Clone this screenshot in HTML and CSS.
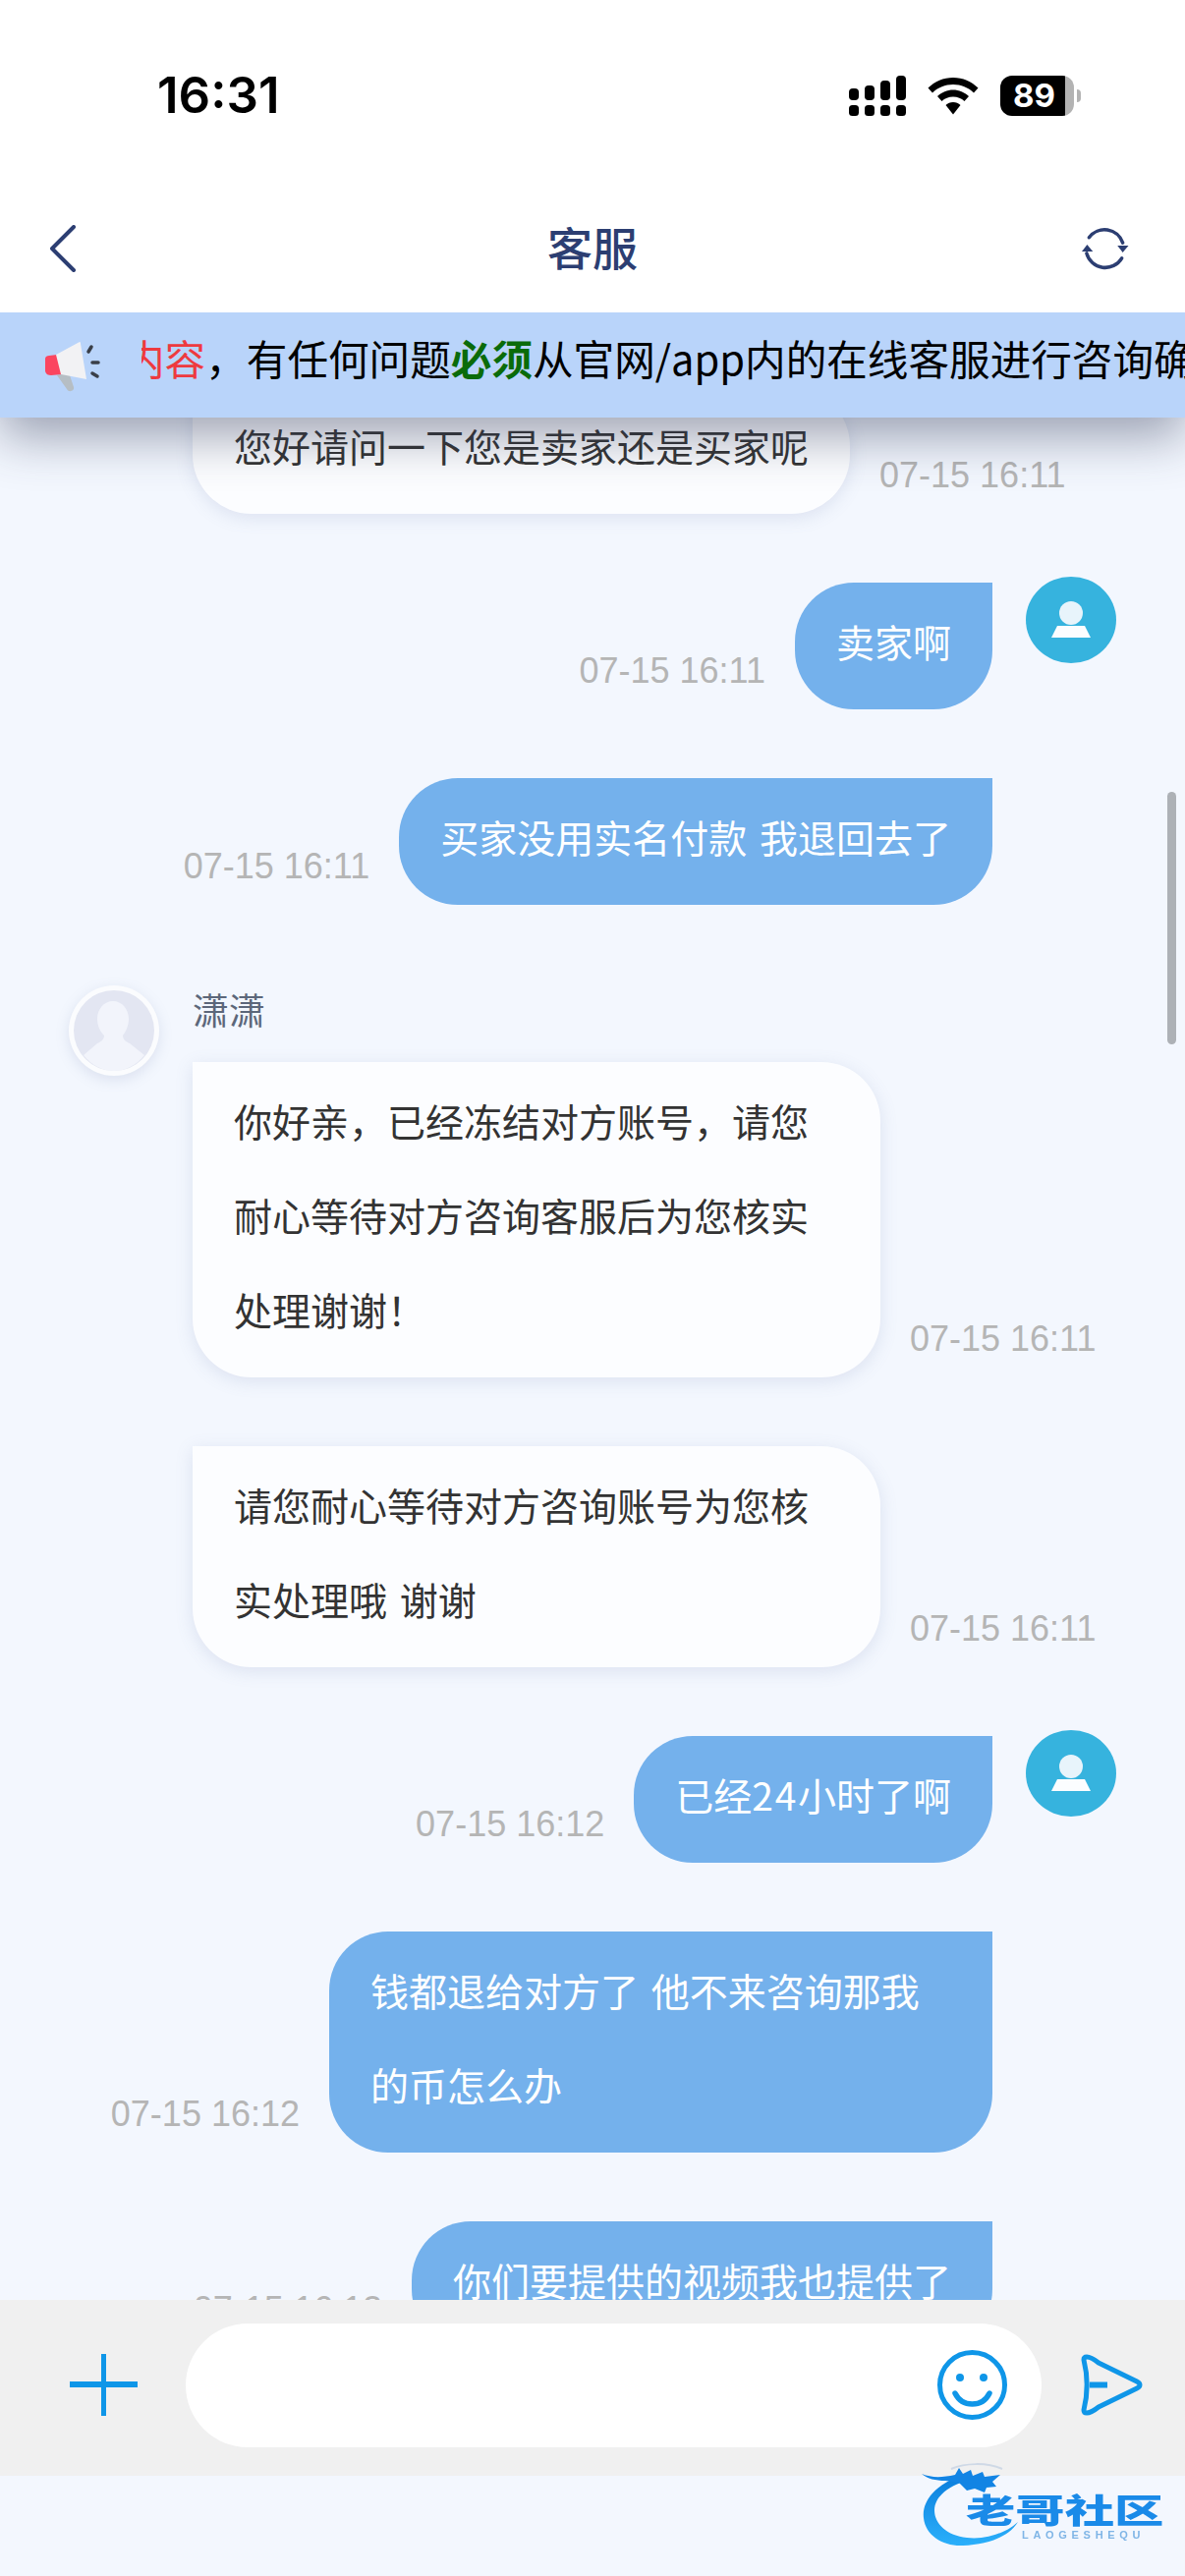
FILE: index.html
```html
<!DOCTYPE html>
<html lang="zh">
<head>
  <meta charset="UTF-8" />
  <meta name="viewport" content="width=device-width, initial-scale=1.0" />
  <title>客服</title>
  <link rel="stylesheet" href="styles.css">
</head>
<body>
  <div class="phone">
    <div class="status">
      <span class="clock">16:31</span>
      <div class="status-icons">
        <svg class="signal" width="58" height="41" viewBox="0 0 58 41">
          <rect x="0" y="13" width="10" height="12" rx="4"/><rect x="16" y="10" width="10" height="15" rx="4"/><rect x="32" y="5" width="10" height="20" rx="4"/><rect x="48" y="0" width="10" height="25" rx="4"/>
          <rect x="0" y="30" width="10" height="11" rx="3.5"/><rect x="16" y="30" width="10" height="11" rx="3.5"/><rect x="32" y="30" width="10" height="11" rx="3.5"/><rect x="48" y="30" width="10" height="11" rx="3.5"/>
        </svg>
        <svg class="wifi" width="52" height="38" viewBox="0 0 52 38">
          <path d="M26 0C16 0 7.500 4 0.500 10.500L5 15.500C10.500 10 18 7 26 7S41.500 10 47 15.500L51.500 10.500C44.500 4 36 0 26 0Z"/>
          <path d="M26 12.500C20 12.500 14.500 15 10 19L14.500 24C17.500 21 21.500 19.500 26 19.500S34.500 21 37.500 24L42 19C37.500 15 32 12.500 26 12.500Z"/>
          <path d="M26 25C23 25 20.500 26 18.500 28L26 37.500L33.500 28C31.500 26 29 25 26 25Z"/>
        </svg>
        <div class="battery">
          <span class="battery-fill">89</span>
          <span class="battery-tip"></span>
        </div>
      </div>
    </div>

    <div class="topbar">
      <div class="bar-side">
        <svg width="26" height="48" viewBox="0 0 26 48" fill="none" stroke="#2c3e72" stroke-width="4" stroke-linecap="round" stroke-linejoin="round">
          <path d="M24 2L2 24L24 46"/>
        </svg>
      </div>
      <h1>客服</h1>
      <div class="bar-side bar-side-right">
        <svg width="49" height="44" viewBox="0 0 49 44" fill="none" stroke="#2c3e72" stroke-width="3.600" stroke-linecap="round">
          <path d="M7.500 10.500A20 20 0 0 1 42.500 16"/>
          <path d="M41.500 32A20 20 0 0 1 5 27"/>
          <path d="M37 19H48.500L42.500 26Z" fill="#2c3e72" stroke="none"/>
          <path d="M0 25H11.500L5.500 18Z" fill="#2c3e72" stroke="none"/>
        </svg>
      </div>
    </div>

    <div class="notice">
      <svg class="horn" width="58" height="52" viewBox="0 0 58 52">
        <path d="M14 34L26 31L31 46C32 50 26 52 24 48Z" fill="#b6bec4"/>
        <path d="M2 17C2 15 4 14 6 14L14 13L19 33L8 34C5 34 3 33 2 30Z" fill="#fb4560"/>
        <path d="M13 13L37 0C38 0 38 1 38 2L44 38L18 33Z" fill="#f2f2f4"/>
        <path d="M49 5L46 10M50 21H56M50 32L55 35" stroke="#3a3f48" stroke-width="3.500" stroke-linecap="round" fill="none"/>
      </svg>
      <div class="notice-track">
        <p class="notice-text"><span class="red">内容</span>，有任何问题<b class="green">必须</b>从官网/app内的在线客服进行咨询确认</p>
      </div>
    </div>

    <div class="chat">
      <div class="row row-in row-first">
        <div class="avatar-slot"></div>
        <div class="bubble">您好请问一下您是卖家还是买家呢</div>
        <span class="time">07-15 16:11</span>
      </div>

      <div class="row row-me">
        <span class="time">07-15 16:11</span>
        <div class="bubble">卖家啊</div>
        <div class="avatar-slot">
          <svg class="avatar-me" width="92" height="88" viewBox="0 0 92 88">
            <ellipse cx="46" cy="44" rx="46" ry="44" fill="#36b3de"/>
            <circle cx="46" cy="37" r="12" fill="#e8f4fb"/>
            <path d="M32 50H60L66 62H26Z" fill="#fbfdff"/>
          </svg>
        </div>
      </div>

      <div class="row row-me">
        <span class="time">07-15 16:11</span>
        <div class="bubble">买家没用实名付款 我退回去了</div>
        <div class="avatar-slot"></div>
      </div>

      <div class="row row-in row-named">
        <div class="avatar-slot">
          <div class="avatar-agent">
            <svg width="82" height="82" viewBox="0 0 82 82">
              <circle cx="41" cy="41" r="41" fill="#e3e6f2"/>
              <path d="M40 11C49 11 56 19 56 29C56 36 53 42 50 46C50 49 52 52 57 54L72 66C64 76 53 82 41 82S18 76 10 66L24 54C29 52 31 49 31 46C27 42 24 36 24 29C24 19 31 11 40 11Z" fill="#f2f4fb"/>
            </svg>
          </div>
        </div>
        <div class="named">
          <div class="name">潇潇</div>
          <div class="bubble-line">
            <div class="bubble">你好亲，已经冻结对方账号，请您耐心等待对方咨询客服后为您核实处理谢谢！</div>
            <span class="time">07-15 16:11</span>
          </div>
        </div>
      </div>

      <div class="row row-in">
        <div class="avatar-slot"></div>
        <div class="bubble">请您耐心等待对方咨询账号为您核实处理哦 谢谢</div>
        <span class="time">07-15 16:11</span>
      </div>

      <div class="row row-me">
        <span class="time">07-15 16:12</span>
        <div class="bubble">已经<span class="num">24</span>小时了啊</div>
        <div class="avatar-slot">
          <svg class="avatar-me" width="92" height="88" viewBox="0 0 92 88">
            <ellipse cx="46" cy="44" rx="46" ry="44" fill="#36b3de"/>
            <circle cx="46" cy="37" r="12" fill="#e8f4fb"/>
            <path d="M32 50H60L66 62H26Z" fill="#fbfdff"/>
          </svg>
        </div>
      </div>

      <div class="row row-me">
        <span class="time">07-15 16:12</span>
        <div class="bubble">钱都退给对方了 他不来咨询那我的币怎么办</div>
        <div class="avatar-slot"></div>
      </div>

      <div class="row row-me">
        <span class="time">07-15 16:12</span>
        <div class="bubble">你们要提供的视频我也提供了</div>
        <div class="avatar-slot"></div>
      </div>

      <div class="scrollbar"></div>
    </div>

    <div class="inputbar">
      <svg width="69" height="63" viewBox="0 0 69 63" fill="#0f96e8">
        <rect x="0" y="28" width="69" height="6"/><rect x="32" y="0" width="5" height="63"/>
      </svg>
      <div class="field">
        <svg width="71" height="71" viewBox="0 0 71 71" fill="none" stroke="#0f96e8" stroke-width="5">
          <circle cx="35.500" cy="35.500" r="33"/>
          <circle cx="23" cy="28" r="4" fill="#0f96e8" stroke="none"/>
          <circle cx="47" cy="28" r="4" fill="#0f96e8" stroke="none"/>
          <path d="M18 44C22 52 28 55 35.500 55S49 52 53 44" stroke-width="5.500" stroke-linecap="round"/>
        </svg>
      </div>
      <svg width="63" height="63" viewBox="0 0 63 63" fill="none" stroke="#0f96e8" stroke-width="5" stroke-linejoin="round" stroke-linecap="round">
        <path d="M6 3C4 3 3 4 3 6C7 22 7 41 3 57C3 59 4 60 6 60C9 60 13 58 18 54L57 35C61 33 61 30 57 28L18 9C13 5 9 3 6 3Z"/>
        <path d="M9 31.500H27" stroke-width="6" stroke-linecap="butt"/>
      </svg>
    </div>

    <div class="footer">
      <div class="logo">
        <svg width="130" height="85" viewBox="0 0 130 85">
          <defs>
            <linearGradient id="swoosh" x1="0" y1="0" x2="0" y2="1">
              <stop offset="0" stop-color="#0c7fdd"/>
              <stop offset="1" stop-color="#2bb0fb"/>
            </linearGradient>
          </defs>
          <path d="M34 15C12 25 0 40 2 56C4 74 22 85 42 84C66 83 88 76 98 60C85 72 65 78 46 76C26 74 13 62 13 48C13 36 24 26 40 20Z" fill="url(#swoosh)"/>
          <path d="M0 11C10 15 20 15 34 12L38 5L42 11L50 7L52 13L62 9L64 14L80 12L72 19L76 24L66 25L64 30L54 26L46 28L38 20L24 18C14 18 6 16 0 11Z" fill="#1284e4"/>
          <path d="M30 6C44 0 66 -1 82 6" stroke="#cfd9e6" stroke-width="2" fill="none"/>
        </svg>
        <span class="logo-name">老哥社区</span>
        <span class="logo-sub">LAOGESHEQU</span>
      </div>
    </div>
  </div>
</body>
</html>
```

FILE: styles.css
```css
* {
  box-sizing: border-box;
}
html, body {
  margin: 0;
  padding: 0;
}
body {
  font-family: "Noto Sans CJK SC", "Liberation Sans", sans-serif;
  background-color: #f3f7fe;
}
.phone {
  width: 1206px;
  height: 2622px;
  display: flex;
  flex-direction: column;
  overflow: hidden;
  background-color: #f3f7fe;
}

/* status bar */
.status {
  height: 200px;
  flex: none;
  position: relative;
  z-index: 3;
  background-color: #fff;
  display: flex;
  justify-content: space-between;
  align-items: flex-start;
  padding: 66px 106px 0 160px;
}
.clock {
  font-family: Inter, "Liberation Sans", sans-serif;
  font-size: 51px;
  font-weight: 600;
  line-height: 62px;
  color: #000;
}
.status-icons {
  display: flex;
  align-items: center;
  gap: 22px;
  margin-top: 11px;
}
.battery {
  display: flex;
  align-items: center;
  gap: 3px;
}
.battery-fill {
  width: 75px;
  height: 41px;
  border-radius: 12px;
  background: linear-gradient(90deg, #000 88%, #b3b3b3 88%);
  color: #fff;
  font-family: Inter, "Liberation Sans", sans-serif;
  font-size: 33px;
  font-weight: 700;
  line-height: 41px;
  padding-left: 13px;
}
.battery-tip {
  width: 4px;
  height: 13px;
  background-color: #b3b3b3;
  border-radius: 0 4px 4px 0;
}

/* title bar */
.topbar {
  height: 118px;
  flex: none;
  position: relative;
  z-index: 3;
  background-color: #fff;
  display: flex;
  justify-content: space-between;
  align-items: center;
  padding: 0 57px 12px 51px;
}
.bar-side {
  width: 54px;
  display: flex;
}
.bar-side-right {
  justify-content: flex-end;
  width: 48px;
}
.topbar h1 {
  margin: 0 0 6px;
  font-size: 46px;
  font-weight: 500;
  line-height: 60px;
  color: #2c3e72;
}

/* scrolling notice */
.notice {
  height: 107px;
  flex: none;
  position: relative;
  z-index: 2;
  background-color: #b9d4fa;
  display: flex;
  align-items: center;
  padding-left: 44px;
  box-shadow: 0 20px 50px rgba(50, 60, 90, 0.45);
}
.horn {
  flex: none;
  margin-top: 4px;
}
.notice-track {
  flex: 1;
  min-width: 0;
  margin-left: 42px;
  padding-bottom: 16px;
  overflow: hidden;
}
.notice-text {
  margin: 0 0 0 -18px;
  font-size: 41.600px;
  line-height: 60px;
  white-space: nowrap;
  color: #000;
}
.red {
  color: #ee3a3f;
}
.green {
  color: #0a6b0a;
}

/* messages */
.chat {
  flex: 1;
  min-height: 0;
  position: relative;
  overflow: hidden;
  padding: 0 70px;
}
.row {
  display: flex;
  align-items: flex-end;
  margin-top: 70px;
}
.row-first {
  margin-top: -31px;
}
.row-me {
  justify-content: flex-end;
}
.row-named {
  margin-top: 82px;
}
.avatar-slot {
  width: 92px;
  flex: none;
  align-self: flex-start;
}
.row-in .avatar-slot {
  margin-right: 34px;
}
.row-me .avatar-slot {
  margin-left: 34px;
}
.avatar-me {
  display: block;
  margin-top: -6px;
}
.avatar-agent {
  width: 92px;
  height: 92px;
  border-radius: 50%;
  background-color: #fbfcfe;
  padding: 5px;
  box-shadow: 0 4px 14px rgba(110, 130, 170, 0.18);
}
.avatar-agent svg {
  display: block;
}
.named {
  display: flex;
  flex-direction: column;
}
.name {
  height: 78px;
  padding-top: 2px;
  font-size: 37px;
  line-height: 44px;
  color: #5c677a;
}
.bubble-line {
  display: flex;
  align-items: flex-end;
}
.bubble {
  padding: 10.500px 42px 22.500px;
  font-size: 39px;
  line-height: 96px;
  word-spacing: 4px;
}
.num {
  letter-spacing: 1.700px;
}
.row-in .bubble {
  max-width: 700px;
  background-color: #fcfdff;
  color: #333;
  border-radius: 0 60px 60px 60px;
  box-shadow: 0 4px 18px rgba(100, 120, 170, 0.16);
}
.row-me .bubble {
  max-width: 675px;
  background-color: #74b1ec;
  color: #fff;
  border-radius: 60px 0 60px 60px;
}
.time {
  flex: none;
  margin-bottom: 19px;
  font-family: "Liberation Sans", Arial, sans-serif;
  font-size: 36px;
  line-height: 40px;
  color: #b5b5b5;
}
.row-in .time {
  margin-left: 30px;
}
.row-me .time {
  margin-right: 30px;
}
.scrollbar {
  position: absolute;
  top: 381px;
  right: 9px;
  width: 9px;
  height: 257px;
  border-radius: 5px;
  background-color: #adb1b6;
}

/* input */
.inputbar {
  height: 179px;
  flex: none;
  background-color: #f0f0f0;
  display: flex;
  align-items: center;
  padding: 0 43px 6px 71px;
}
.field {
  flex: 1;
  height: 126px;
  margin: 0 40px 0 49px;
  border-radius: 63px;
  background-color: #fff;
  display: flex;
  justify-content: flex-end;
  align-items: center;
  padding-right: 35px;
}

/* watermark */
.footer {
  height: 102px;
  flex: none;
  position: relative;
}
.logo {
  position: absolute;
  left: 938px;
  top: -13px;
  width: 250px;
  height: 85px;
  filter: blur(0.6px);
}
.logo svg {
  display: block;
}
.logo-name {
  position: absolute;
  left: 45px;
  top: 29px;
  font-size: 34px;
  font-weight: 900;
  line-height: 36px;
  white-space: nowrap;
  color: #1a8ae8;
  transform: scaleX(1.48);
  transform-origin: left center;
}
.logo-sub {
  position: absolute;
  left: 102px;
  top: 66px;
  font-family: "Liberation Sans", Arial, sans-serif;
  font-size: 11px;
  font-weight: 700;
  line-height: 14px;
  letter-spacing: 4.700px;
  white-space: nowrap;
  color: #7fb5e6;
}
```
